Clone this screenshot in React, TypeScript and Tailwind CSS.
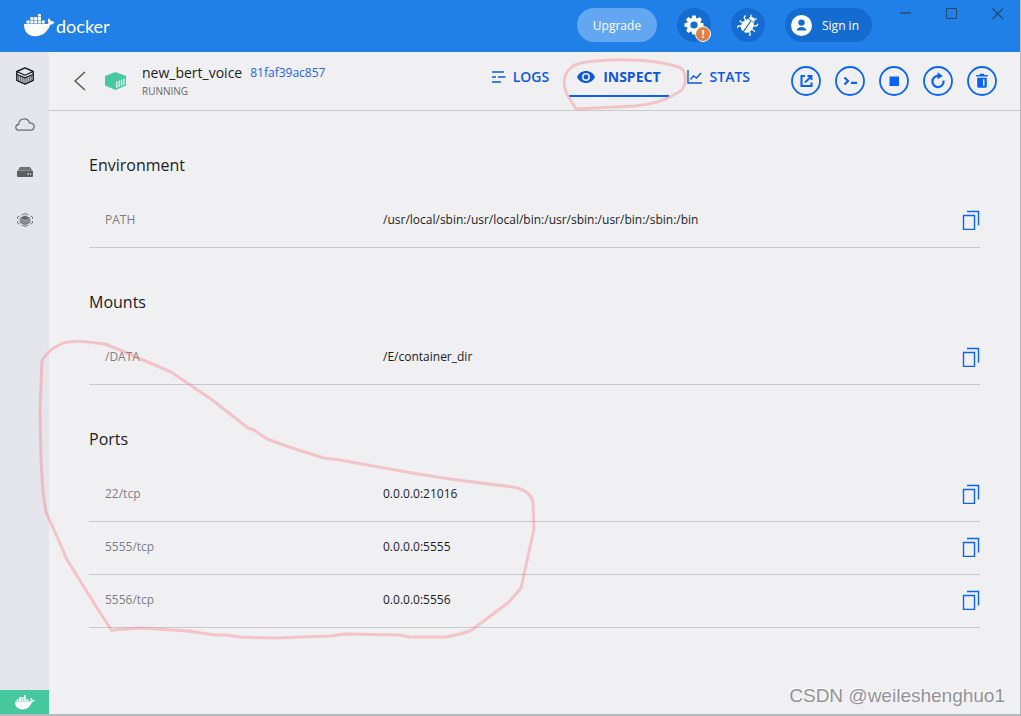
import type { ReactNode } from "react";

function Whale({ className }: { className: string }) {
  return (
    <svg viewBox="0 0 31 23" className={className} fill="currentColor" aria-hidden="true">
      <path d="M0 10h22.600c1 0 1.700-.4 2-1.200-.9-1.300-1-3 .1-4.500 1.300.8 2 1.800 2.100 3 1.300-.3 2.700 0 3.800.7-.7 1.700-2.200 2.500-4.300 2.600C23.900 17.700 19 22.200 11.500 22.200 4 22.200 0 18 0 10z" />
      <path d="M2.500 6.500h3.100v3H2.500zM6.300 6.500h3.100v3H6.300zM10.100 6.500h3.100v3h-3.100zM13.900 6.500h3.100v3h-3.100zM17.700 6.500h3.100v3h-3.100zM6.300 3.100h3.100v2.800H6.300zM10.100 3.100h3.100v2.800h-3.100zM13.900 3.100h3.100v2.800h-3.100zM13.900 0h3.100v2.500h-3.100z" />
    </svg>
  );
}

function ContainersIcon() {
  return (
    <svg viewBox="0 0 18 18" className="h-[18px] w-[18px]" fill="none" stroke="#17191c" strokeWidth="1.400" strokeLinejoin="round" aria-hidden="true">
      <path d="M9 .8 17.200 4.500v8.800L9 17.200.8 13.300V4.500z" />
      <path d="M.8 4.500 9 8.200l8.200-3.700M1 7.500l8 3.400 8-3.400" strokeWidth="1.200" />
      <path d="M2.800 9v4.500M4.800 9.800v4.600M6.900 10.700v4.700M9 11v5.500M11.100 10.700v4.700M13.200 9.800v4.600M15.200 9v4.500" strokeWidth=".8" />
    </svg>
  );
}

function CloudIcon() {
  return (
    <svg viewBox="0 0 20 13" className="h-[13px] w-5" fill="none" stroke="#6b6d70" strokeWidth="1.300" aria-hidden="true">
      <path d="M4.200 12.200C2.200 12.200.8 11 .8 9.300c0-1.600 1.100-2.700 2.800-2.900C4 3 6.300.8 9.200.8c2.600 0 4.600 1.500 5.300 4 2.700.1 4.600 1.600 4.600 3.800 0 2.100-1.500 3.600-3.600 3.600z" />
    </svg>
  );
}

function VolumeIcon() {
  return (
    <svg viewBox="0 0 16 10" className="h-[10px] w-4" aria-hidden="true">
      <path d="M3 0h10l2.500 3.800H.5z" fill="#707275" />
      <path d="M0 4h16V9a1 1 0 0 1-1 1H1a1 1 0 0 1-1-1z" fill="#5c5e61" />
      <path d="M10.500 6.300h1.500v1.500h-1.500zM13 6.300h1v1.500h-1z" fill="#e4e6eb" />
    </svg>
  );
}

function DevIcon() {
  return (
    <svg viewBox="0 0 16 14" className="h-[14px] w-4" fill="none" stroke="#77797c" aria-hidden="true">
      <path d="M4.500 2 8 .6 11.500 2M13.500 3l2 1v2M15.500 8v2l-2 1.200M11.500 12 8 13.500 4.500 12M2.500 11.200.5 10V8M.5 6V4l2-1" />
      <path d="m8 2.400 5.500 2.600L8 7.500 2.500 5z" fill="#66686b" stroke="none" />
      <path d="m2.500 6.500 5.500 2.500 5.500-2.500M2.500 8.700 8 11.200l5.500-2.500" strokeWidth="1.700" />
    </svg>
  );
}

function GearIcon() {
  return (
    <svg viewBox="-12 -12 24 24" className="size-6" aria-hidden="true">
      <g fill="#fff">
        <circle r="7" />
        <path d="M-1.700-9.500h3.400l.8 4h-5zM-1.700 9.500h3.400l.8-4h-5z" />
        <path d="M-1.700-9.500h3.400l.8 4h-5zM-1.700 9.500h3.400l.8-4h-5z" transform="rotate(45)" />
        <path d="M-1.700-9.500h3.400l.8 4h-5zM-1.700 9.500h3.400l.8-4h-5z" transform="rotate(90)" />
        <path d="M-1.700-9.500h3.400l.8 4h-5zM-1.700 9.500h3.400l.8-4h-5z" transform="rotate(135)" />
      </g>
      <circle r="3.600" fill="#156cd0" />
    </svg>
  );
}

function BugIcon() {
  return (
    <svg viewBox="0 0 22 22" className="h-[22px] w-[22px]" aria-hidden="true">
      <g transform="rotate(35 11 11)">
        <path d="M10.400 5.800v13.200C7.200 18.800 5 16 5 12.300c0-2.700 1.100-5 2.800-6.500zM11.600 5.800v13.200c3.200-.2 5.400-3 5.400-6.700 0-2.700-1.100-5-2.800-6.500z" fill="#fff" />
        <path d="M7.700 5.200a3.300 3.300 0 0 1 6.600 0z" fill="#fff" />
        <path d="M9 3 7.500.8M13 3 14.500.8M6.500 8.500 3.500 7V4.500M15.500 8.500l3-1.500V4.500M5.600 12.300H1.500M16.400 12.300h4.100M6.300 15.800l-2.600 1.500v2.500M15.700 15.800l2.600 1.500v2.500" stroke="#fff" strokeWidth="1.300" fill="none" />
      </g>
    </svg>
  );
}

function CopyIcon() {
  return (
    <svg viewBox="0 0 18 20" className="h-5 w-[18px]" fill="none" stroke="#0b63f6" strokeWidth="1.400" aria-hidden="true">
      <path d="M1.500 5.500h11v14h-11zM5 1.500h11.500v14" />
    </svg>
  );
}

const actions: { label: string; icon: ReactNode }[] = [
  {
    label: "Open in browser",
    icon: (
      <>
        <path d="M14 10h-3.500v10h10v-3.500" strokeWidth="2.100" />
        <path d="M14 16.500 20 10.500M16.500 10H20.500v4" />
      </>
    ),
  },
  { label: "Open terminal", icon: <path d="m9.500 11.500 3.500 3.500-3.500 3.500M16 16.800h6" strokeWidth="2.200" /> },
  { label: "Stop", icon: <path d="M10.500 10.500h9.500v9.500h-9.500z" fill="currentColor" stroke="none" /> },
  {
    label: "Restart",
    icon: (
      <>
        <path d="M15.500 9.900a5.600 5.600 0 1 0 5 4.600" strokeWidth="2.200" />
        <path d="m14.500 6.300 5.300 3.600-5.300 3.300z" fill="currentColor" stroke="none" />
      </>
    ),
  },
  {
    label: "Delete",
    icon: (
      <path
        d="M9.200 9h3.300l.7-1.200h3.600l.7 1.200h3.300v1.500H9.200zM10.200 11.700h9.600v8.600a1.500 1.500 0 0 1-1.500 1.500h-6.600a1.500 1.500 0 0 1-1.500-1.500zM16 13.300v6.500h1.500v-6.500z"
        fill="currentColor"
        fillRule="evenodd"
        stroke="none"
      />
    ),
  },
];

const sections = [
  { title: "Environment", rows: [["PATH", "/usr/local/sbin:/usr/local/bin:/usr/sbin:/usr/bin:/sbin:/bin"]] },
  { title: "Mounts", rows: [["/DATA", "/E/container_dir"]] },
  {
    title: "Ports",
    rows: [
      ["22/tcp", "0.0.0.0:21016"],
      ["5555/tcp", "0.0.0.0:5555"],
      ["5556/tcp", "0.0.0.0:5556"],
    ],
  },
];

function TitleBar() {
  return (
    <header className="flex h-[52px] shrink-0 items-start bg-[#2080e8] text-white">
      <div className="flex pl-6 pt-[14px]">
        <Whale className="h-[23px] w-[31px]" />
        <span className="pl-px font-['Lato',sans-serif] text-[18px] leading-6">docker</span>
      </div>
      <div className="ml-auto flex gap-5 pt-2 text-[12px]">
        <button className="h-[34px] w-20 rounded-full bg-[#63a6f2] pt-px">Upgrade</button>
        <button aria-label="Settings" className="relative flex size-[34px] items-center justify-center rounded-full bg-[#156cd0]">
          <GearIcon />
          <span className="absolute bottom-0 right-0 flex size-4 items-center justify-center rounded-full border border-white bg-[#e2803f] text-[11px] font-bold">!</span>
        </button>
        <button aria-label="Troubleshoot" className="flex size-[34px] items-center justify-center rounded-full bg-[#156cd0]">
          <BugIcon />
        </button>
        <button className="flex h-[34px] w-[87px] items-center gap-[10px] rounded-full bg-[#156cd0] pl-[6px]">
          <svg viewBox="0 0 21 21" className="size-[21px]" aria-hidden="true">
            <circle cx="10.500" cy="10.500" r="10.500" fill="#fff" />
            <circle cx="10.500" cy="7.600" r="3.200" fill="#156cd0" />
            <path d="M5.700 15.600c0-2.600 2.200-3.700 4.800-3.700s4.800 1.100 4.800 3.700z" fill="#156cd0" />
          </svg>
          <span className="pt-px">Sign in</span>
        </button>
      </div>
      <div className="ml-7 mr-4 flex gap-[34px] pt-2 text-[#25496f]">
        <button aria-label="Minimize">
          <svg viewBox="0 0 12 12" className="size-3" aria-hidden="true"><path d="M0 5h11" stroke="currentColor" strokeWidth="1.300" /></svg>
        </button>
        <button aria-label="Maximize">
          <svg viewBox="0 0 12 12" className="size-3" aria-hidden="true"><path d="M.5.500h10v10H.5z" fill="none" stroke="currentColor" /></svg>
        </button>
        <button aria-label="Close">
          <svg viewBox="0 0 12 12" className="size-3" aria-hidden="true"><path d="m.5.500 10.500 10.500M11 .5.500 11" stroke="currentColor" strokeWidth="1.200" /></svg>
        </button>
      </div>
    </header>
  );
}

function Sidebar() {
  return (
    <nav className="flex w-[49px] shrink-0 flex-col bg-[#e4e6eb]">
      <a href="#containers" aria-label="Containers" className="flex h-12 items-center justify-center"><ContainersIcon /></a>
      <a href="#images" aria-label="Images" className="flex h-12 items-center justify-center"><CloudIcon /></a>
      <a href="#volumes" aria-label="Volumes" className="flex h-12 items-center justify-center"><VolumeIcon /></a>
      <a href="#environments" aria-label="Dev environments" className="flex h-12 items-center justify-center"><DevIcon /></a>
      <div className="mt-auto flex h-6 items-center justify-center bg-[#46c99c] text-white">
        <Whale className="h-[15px] w-5" />
      </div>
    </nav>
  );
}

function ContainerBar() {
  return (
    <div className="flex h-[59px] shrink-0 border-b border-[#c9cacd] pl-[25px] pr-6">
      <button aria-label="Back" className="mt-[19px] h-5 text-[#55585c]">
        <svg viewBox="0 0 12 20" className="h-5 w-3" fill="none" stroke="currentColor" strokeWidth="1.500" aria-hidden="true"><path d="M11 1 1 10l10 9" /></svg>
      </button>
      <svg viewBox="0 0 22 18" className="ml-[19px] mt-5 h-[18px] w-[22px]" aria-hidden="true">
        <path d="M10.500 0 21 4v9.500L10.500 18 0 13.500V4z" fill="#46c99c" />
        <path d="M11.700 9.500v6.500M14.100 8.600v6.500M16.500 7.700v6.500M18.900 6.800v6.500" stroke="#f0f0f3" strokeWidth="1.300" />
      </svg>
      <div className="ml-[15px] pt-[10px]">
        <div className="flex items-center gap-2">
          <h1 className="text-[14px] leading-[22px] text-[#1b1c1e]">new_bert_voice</h1>
          <a href="#id" className="text-[12px] leading-5 text-[#2463f0]">81faf39ac857</a>
        </div>
        <p className="text-[10px] leading-[14px] text-[#64666a]">RUNNING</p>
      </div>
      <div className="ml-auto flex text-[14px] font-semibold text-[#0f58dc]">
        <button className="flex h-[45px] items-center gap-[7px] pt-1">
          <svg viewBox="0 0 14 12" className="h-3 w-[14px]" stroke="currentColor" strokeWidth="1.400" aria-hidden="true"><path d="M0 1h12M0 6h4M6 6h7.500M0 11h9" /></svg>
          LOGS
        </button>
        <button className="ml-5 flex h-[45px] items-center gap-2 border-b-2 border-[#0b63f6] pl-2 pr-2 pt-[6px] font-bold">
          <svg viewBox="0 0 18 12" className="h-3 w-[18px]" aria-hidden="true">
            <path d="M0 6c1.700-3.700 5-6 9-6s7.300 2.300 9 6c-1.700 3.700-5 6-9 6S1.700 9.700 0 6z" fill="currentColor" />
            <circle cx="9" cy="6" r="3.200" fill="currentColor" stroke="#f0f0f3" strokeWidth="1.500" />
          </svg>
          INSPECT
        </button>
        <button className="ml-[18px] flex h-[45px] items-center gap-2 pt-1">
          <svg viewBox="0 0 15 14" className="h-[14px] w-[15px]" fill="none" stroke="currentColor" strokeWidth="1.400" aria-hidden="true"><path d="M1 0v13h14M3.500 9.500l3-3.500 3 2L14 3" /></svg>
          STATS
        </button>
      </div>
      <div className="ml-10 flex gap-[14px] pt-[14px] text-[#0b63f6]">
        {actions.map((a) => (
          <button key={a.label} aria-label={a.label} className="-mr-px ml-px size-[30px]">
            <svg viewBox="0 0 30 30" className="size-[30px]" fill="none" stroke="currentColor" strokeWidth="1.900" aria-hidden="true">
              <circle cx="15" cy="15" r="14" strokeWidth="1.800" />
              {a.icon}
            </svg>
          </button>
        ))}
      </div>
    </div>
  );
}

export default function App() {
  return (
    <div className="relative flex min-h-screen flex-col bg-[#b9babd] pb-[2px] font-['Open_Sans',sans-serif]">
      <div className="flex grow flex-col border-r border-[#b9babd] bg-[#f0f0f3]">
        <TitleBar />
        <div className="flex grow">
          <Sidebar />
          <div className="flex grow flex-col">
            <ContainerBar />
            <main className="px-10">
              {sections.map((s) => (
                <section key={s.title} className="pt-10">
                  <h2 className="mb-4 text-[16px] leading-7 text-[#1b1c1e]">{s.title}</h2>
                  <table className="w-full table-fixed border-separate border-spacing-0 text-[12px] leading-5">
                    <tbody>
                      {s.rows.map(([name, value]) => (
                        <tr key={name}>
                          <th scope="row" className="h-[53px] w-[294px] border-b border-[#c9cacd] pb-[2px] pl-4 text-left font-normal text-[#7c7e82]">{name}</th>
                          <td className="h-[53px] border-b border-[#c9cacd] pb-[2px] text-[#1b1c1e]">{value}</td>
                          <td className="h-[53px] w-[18px] border-b border-[#c9cacd] pb-[2px]">
                            <button aria-label={"Copy " + name} className="block"><CopyIcon /></button>
                          </td>
                        </tr>
                      ))}
                    </tbody>
                  </table>
                </section>
              ))}
            </main>
          </div>
        </div>
      </div>
      <svg viewBox="0 0 1021 716" className="pointer-events-none absolute left-0 top-0 h-[716px] w-[1021px]" fill="none" stroke="#f87c82" strokeOpacity=".38" strokeWidth="3" strokeLinejoin="round" strokeLinecap="round" aria-hidden="true">
        <path d="M576 109 568 96C562 86 563 73 572 67 578 62 592 61 610 60 640 59 662 61 681 68 687 72 687 88 679 92 667 99 656 104 634 106L576 109" />
        <path d="M112 631 97 608 66 558 62 548 46 512 43 493 41 460 40 410 42 361Q43 357 52 349L63 343Q76 340 88 342L105 344 120 350 171 372 211 399 248 428 254 430 267 439 292 448 324 458 340 460 412 473 450 479 513 487Q530 490 533 502L534 529 521 588 509 602 473 629Q468 633 445 637L410 637 399 635 345 634 330 636 275 638 240 637 226 635 215 635 188 631 140 628 113 630" />
      </svg>
      <p className="pointer-events-none absolute bottom-[8px] right-4 font-['Liberation_Sans',sans-serif] text-[19px] leading-6 text-[#929397] [text-shadow:-1px_-1px_0_#ffffff]">CSDN @weileshenghuo1</p>
    </div>
  );
}
